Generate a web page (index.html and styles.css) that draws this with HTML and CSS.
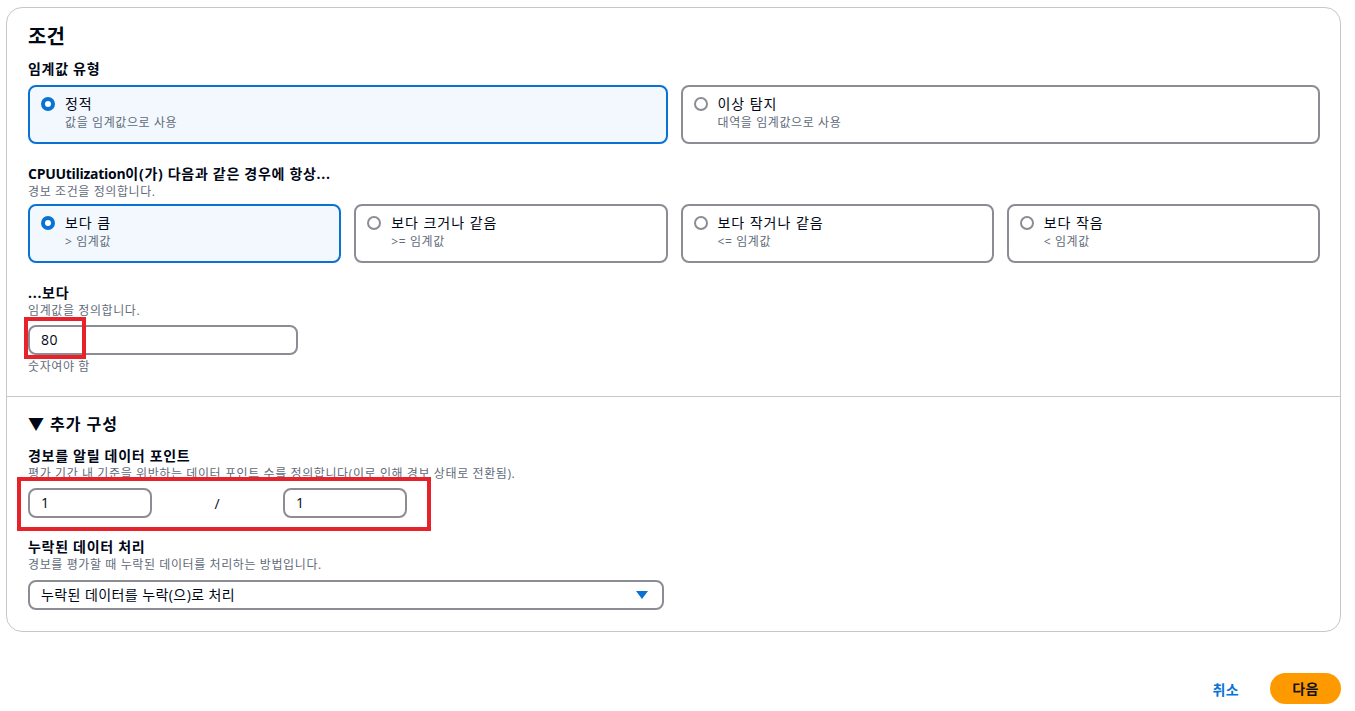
FILE: index.html
```html
<!DOCTYPE html>
<html lang="ko">
<head>
  <meta charset="UTF-8">
  <meta name="viewport" content="width=device-width, initial-scale=1.0">
  <title>조건</title>
  <link rel="stylesheet" href="styles.css">
</head>
<body>
  <div class="card">
    <div class="section">
      <h2>조건</h2>

      <div class="label first">임계값 유형</div>
      <div class="tiles two">
        <div class="tile selected">
          <span class="radio"></span>
          <div><div class="tile-title">정적</div><div class="tile-desc">값을 임계값으로 사용</div></div>
        </div>
        <div class="tile">
          <span class="radio"></span>
          <div><div class="tile-title">이상 탐지</div><div class="tile-desc">대역을 임계값으로 사용</div></div>
        </div>
      </div>

      <div class="label"><span class="latin">CPUUtilization</span>이(가) 다음과 같은 경우에 항상...</div>
      <div class="desc">경보 조건을 정의합니다.</div>
      <div class="tiles four">
        <div class="tile selected">
          <span class="radio"></span>
          <div><div class="tile-title">보다 큼</div><div class="tile-desc">&gt; 임계값</div></div>
        </div>
        <div class="tile">
          <span class="radio"></span>
          <div><div class="tile-title">보다 크거나 같음</div><div class="tile-desc">&gt;= 임계값</div></div>
        </div>
        <div class="tile">
          <span class="radio"></span>
          <div><div class="tile-title">보다 작거나 같음</div><div class="tile-desc">&lt;= 임계값</div></div>
        </div>
        <div class="tile">
          <span class="radio"></span>
          <div><div class="tile-title">보다 작음</div><div class="tile-desc">&lt; 임계값</div></div>
        </div>
      </div>

      <div class="label">...보다</div>
      <div class="desc">임계값을 정의합니다.</div>
      <div class="input threshold">80</div>
      <div class="hint">숫자여야 함</div>
    </div>

    <div class="section extra">
      <div class="expander">▼ 추가 구성</div>

      <div class="label">경보를 알릴 데이터 포인트</div>
      <div class="desc">평가 기간 내 기준을 위반하는 데이터 포인트 수를 정의합니다(이로 인해 경보 상태로 전환됨).</div>
      <div class="points">
        <div class="input small">1</div>
        <span class="slash">/</span>
        <div class="input small">1</div>
      </div>

      <div class="label">누락된 데이터 처리</div>
      <div class="desc">경보를 평가할 때 누락된 데이터를 처리하는 방법입니다.</div>
      <div class="input select">
        <span>누락된 데이터를 누락(으)로 처리</span>
        <svg width="12" height="8" viewBox="0 0 12 8"><path d="M0 0h12L6 8z" fill="#0972d3"/></svg>
      </div>
    </div>
  </div>

  <div class="actions">
    <span class="link">취소</span>
    <span class="primary">다음</span>
  </div>

  <div class="mark mark-one"></div>
  <div class="mark mark-two"></div>
</body>
</html>
```

FILE: styles.css
```css
body {
  margin: 0;
  padding: 7px 14px 0 6px;
  font-family: "Open Sans", "Noto Sans CJK KR", sans-serif;
  color: #000716;
  background: #fff;
  letter-spacing: 0.06em;
  position: relative;
}
.latin { letter-spacing: -0.02em; }
.card {
  border: 1px solid #c6c6cd;
  border-radius: 16px;
}
.section {
  padding: 17px 20px 21px 21px;
}
.section.extra {
  border-top: 1px solid #c6c6cd;
  padding-top: 16px;
  padding-bottom: 21px;
}
h2 {
  margin: 0;
  font-size: 20px;
  line-height: 24px;
  font-weight: 700;
  letter-spacing: 0;
}
.label {
  margin-top: 20px;
  font-size: 14px;
  line-height: 20px;
  font-weight: 700;
  letter-spacing: 0.05em;
}
.label.first {
  margin-top: 10px;
}
.desc {
  font-size: 12px;
  line-height: 16px;
  color: #5f6b7a;
  letter-spacing: 0.05em;
}
.hint {
  margin-top: 4px;
  font-size: 12px;
  line-height: 16px;
  color: #5f6b7a;
  letter-spacing: 0.05em;
}
.tiles {
  display: grid;
  gap: 13px;
  margin-top: 6px;
}
.tiles.two { grid-template-columns: 1fr 1fr; }
.tiles.four { grid-template-columns: repeat(4, 1fr); margin-top: 4px; }
.tile {
  display: flex;
  gap: 10px;
  border: 2px solid #8c8c94;
  border-radius: 8px;
  padding: 6px 12px 10px 11px;
  height: 59px;
  box-sizing: border-box;
}
.tile.selected {
  border-color: #0972d3;
  background: #f2f8fd;
}
.radio {
  width: 14px;
  height: 14px;
  border: 2px solid #8c8c94;
  border-radius: 50%;
  box-sizing: border-box;
  margin-top: 4px;
  flex: none;
  background: #fff;
}
.selected .radio {
  border: 4px solid #0972d3;
}
.tile-title {
  font-size: 14px;
  line-height: 22px;
}
.tile-desc {
  font-size: 12px;
  line-height: 16px;
  color: #5f6b7a;
  letter-spacing: 0.05em;
}
.input {
  height: 30px;
  box-sizing: border-box;
  border: 2px solid #8c8c94;
  border-radius: 8px;
  padding: 0 11px;
  font-size: 14px;
  line-height: 26px;
  margin-top: 6px;
  letter-spacing: 0.03em;
}
.threshold { width: 270px; }
.expander {
  font-size: 16px;
  line-height: 22px;
  font-weight: 700;
}
.expander + .label { margin-top: 11px; }
.points {
  display: flex;
  align-items: center;
  margin-top: 6px;
}
.points + .label { margin-top: 19px; }
.points .input { margin-top: 0; }
.small { width: 124px; }
.slash {
  width: 131px;
  text-align: center;
  font-size: 14px;
}
.select {
  width: 636px;
  display: flex;
  justify-content: space-between;
  align-items: center;
  padding-right: 14px;
  margin-top: 7px;
}
.actions {
  display: flex;
  justify-content: flex-end;
  align-items: center;
  gap: 31px;
  margin-top: 41px;
}
.link {
  color: #0972d3;
  font-weight: 700;
  font-size: 14px;
  letter-spacing: 0.03em;
}
.primary {
  background: #ff9900;
  color: #0f141a;
  font-weight: 700;
  font-size: 14px;
  line-height: 31px;
  border-radius: 16px;
  width: 71px;
  text-align: center;
  letter-spacing: 0.03em;
}
.mark {
  position: absolute;
  border: 4px solid #e8222a;
  box-sizing: border-box;
}
.mark-one {
  left: 24px;
  top: 317px;
  width: 62px;
  height: 42px;
}
.mark-two {
  left: 17px;
  top: 477px;
  width: 414px;
  height: 54px;
}
```
